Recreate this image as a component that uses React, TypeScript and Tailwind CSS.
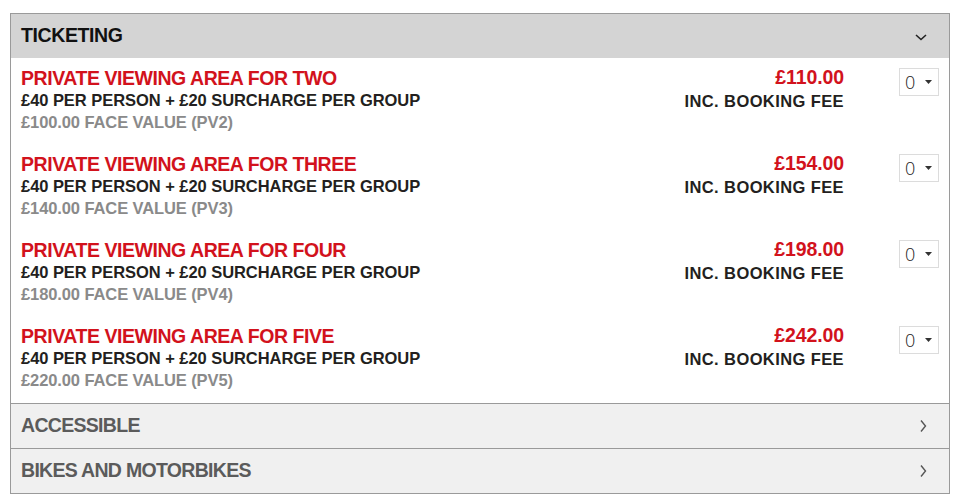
type Ticket = {
    title: string;
    face: string;
    price: string;
};

const tickets: Ticket[] = [
    { title: 'PRIVATE VIEWING AREA FOR TWO', face: '£100.00 FACE VALUE (PV2)', price: '£110.00' },
    { title: 'PRIVATE VIEWING AREA FOR THREE', face: '£140.00 FACE VALUE (PV3)', price: '£154.00' },
    { title: 'PRIVATE VIEWING AREA FOR FOUR', face: '£180.00 FACE VALUE (PV4)', price: '£198.00' },
    { title: 'PRIVATE VIEWING AREA FOR FIVE', face: '£220.00 FACE VALUE (PV5)', price: '£242.00' },
];

const font = { fontFamily: '"Liberation Sans", Arial, sans-serif' };

function QtySelect() {
    return (
        <div className="w-[40px] h-[28px] mt-[2px] border border-[#dcdcdc] bg-white flex items-center pl-[5px] pr-[6px] justify-between">
            <span className="text-[18px] font-light text-[#222]" style={{ fontFamily: '"Open Sans", sans-serif' }}>0</span>
            <svg width="7" height="4" viewBox="0 0 7 4">
                <path d="M0 0 L7 0 L3.5 4 Z" fill="#333" />
            </svg>
        </div>
    );
}

export default function App() {
    return (
        <div className="bg-white w-[959px] h-[502px] pt-[13px] pl-[10px]" style={font}>
            <div className="w-[940px] border border-[#9a9a9a]">
                {/* open section */}
                <div className="h-[44px] bg-[#d4d4d4] flex items-center justify-between pl-[10px] pr-[22px]">
                    <span className="text-[19.5px] font-bold tracking-[-0.4px] text-[#111]">TICKETING</span>
                    <svg width="12" height="7" viewBox="0 0 12 7" className="mt-[2px]">
                        <path d="M1 1 L6 5.5 L11 1" fill="none" stroke="#222" strokeWidth="1.6" />
                    </svg>
                </div>

                <div className="pb-[1px]">
                    {tickets.map((t) => (
                        <div key={t.title} className="h-[86px] flex pl-[10px] pr-[10px] pt-[8px]">
                            <div className="flex-1 flex flex-col">
                                <span className="text-[19.5px] leading-[24px] font-bold tracking-[-0.45px] text-[#d2121c]">{t.title}</span>
                                <span className="text-[16.5px] leading-[21px] font-bold tracking-[-0.05px] text-[#231f20]">£40 PER PERSON + £20 SURCHARGE PER GROUP</span>
                                <span className="text-[16.5px] leading-[23px] font-bold tracking-[-0.1px] text-[#8a8a8a]">{t.face}</span>
                            </div>
                            <div className="flex flex-col items-end pr-[55px] -mt-[1px]">
                                <span className="text-[19.5px] leading-[24px] font-bold tracking-[-0.1px] text-[#d2121c]">{t.price}</span>
                                <span className="text-[16.5px] leading-[24px] font-bold tracking-[0.4px] text-[#231f20]">INC. BOOKING FEE</span>
                            </div>
                            <QtySelect />
                        </div>
                    ))}
                </div>

                {['ACCESSIBLE', 'BIKES AND MOTORBIKES'].map((s) => (
                    <div key={s} className="h-[45px] bg-[#f0f0f0] border-t border-[#9a9a9a] flex items-center justify-between pl-[10px] pr-[22px]">
                        <span className="text-[19.5px] font-bold tracking-[-0.7px] text-[#5b5b5b]">{s}</span>
                        <svg width="7" height="12" viewBox="0 0 7 12">
                            <path d="M1 0.5 L5.5 6 L1 11.5" fill="none" stroke="#555" strokeWidth="1.4" />
                        </svg>
                    </div>
                ))}
            </div>
        </div>
    );
}
